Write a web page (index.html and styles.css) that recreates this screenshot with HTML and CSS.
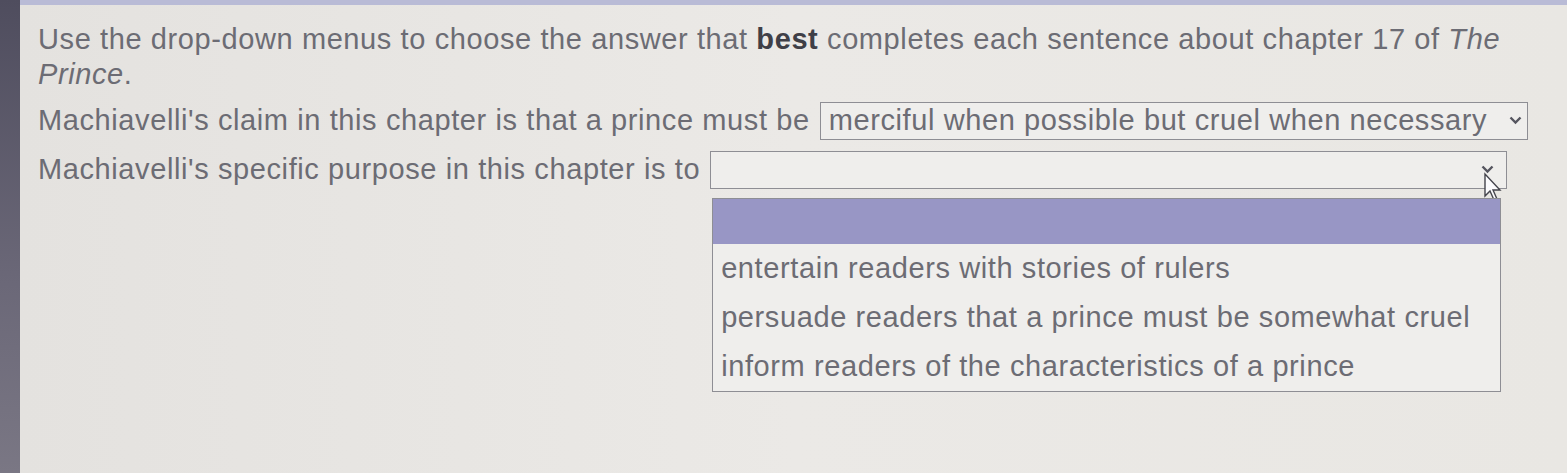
FILE: index.html
```html
<!DOCTYPE html>
<html lang="en">
<head>
    <meta charset="UTF-8">
    <meta name="viewport" content="width=device-width, initial-scale=1.0">
    <title>The Prince - Chapter 17</title>
    <link rel="stylesheet" href="styles.css">
</head>
<body>
    <div class="page">
        <div class="side-strip"></div>
        <div class="content">
            <p class="intro">Use the drop-down menus to choose the answer that <b>best</b> completes each sentence about chapter 17 of <i>The Prince</i>.</p>

            <div class="question">
                <span>Machiavelli's claim in this chapter is that a prince must be</span>
                <div class="select first">
                    <span class="value">merciful when possible but cruel when necessary</span>
                    <span class="chevron">
                        <svg width="13" height="9" viewBox="0 0 13 9"><path d="M1.5 1.5 L6.5 6.5 L11.5 1.5" fill="none" stroke="#55555f" stroke-width="2.4"/></svg>
                    </span>
                </div>
            </div>

            <div class="question">
                <span>Machiavelli's specific purpose in this chapter is to</span>
                <div class="select second">
                    <span class="value"></span>
                    <span class="chevron">
                        <svg width="13" height="9" viewBox="0 0 13 9"><path d="M1.5 1.5 L6.5 6.5 L11.5 1.5" fill="none" stroke="#55555f" stroke-width="2.4"/></svg>
                    </span>
                    <svg class="cursor" width="22" height="30" viewBox="0 0 22 30"><path d="M2 2 L2 24 L7 19 L11 28 L14 27 L10 18 L17 18 Z" fill="#fbfbfd" stroke="#44444c" stroke-width="1.4"/></svg>
                    <ul class="options">
                        <li class="selected"></li>
                        <li>entertain readers with stories of rulers</li>
                        <li>persuade readers that a prince must be somewhat cruel</li>
                        <li>inform readers of the characteristics of a prince</li>
                    </ul>
                </div>
            </div>
        </div>
    </div>
</body>
</html>
```

FILE: styles.css
```css
body {
  margin: 0;
  padding: 0;
  background-color: #e7e5e2;
  font-family: "Liberation Sans", Arial, sans-serif;
  color: #6c6c74;
  overflow: hidden;
}
.page {
  display: flex;
  height: 473px;
}
.side-strip {
  width: 20px;
  flex-shrink: 0;
  background: linear-gradient(to bottom, #4f4d5e, #6b6878 60%, #7a7784);
}
.content {
  flex: 1;
  border-top: 5px solid #b9bbd6;
  padding: 17px 30px 0 18px;
  background: linear-gradient(to right, #e4e2df, #ebe9e6 50%, #e9e7e3);
  font-size: 29px;
  letter-spacing: 0.6px;
}
.intro {
  margin: 0 0 4px 0;
  line-height: 35px;
}
.intro b {
  color: #3f3f47;
}
.question {
  display: flex;
  align-items: center;
  height: 49px;
  white-space: nowrap;
}
.select {
  position: relative;
  display: flex;
  align-items: center;
  justify-content: space-between;
  height: 38px;
  box-sizing: border-box;
  border: 1.5px solid #8e8e94;
  background-color: #efeeec;
  padding: 0 5px 0 8px;
  margin-left: 10px;
}
.select.first {
  width: 708px;
}
.select.second {
  width: 797px;
  padding-right: 12px;
}
.chevron {
  display: flex;
  align-items: center;
}
.cursor {
  position: absolute;
  right: 1px;
  top: 20px;
}
.options {
  position: absolute;
  top: 46px;
  left: 1px;
  width: 789px;
  margin: 0;
  padding: 0;
  list-style: none;
  background-color: #efeeec;
  border: 1.5px solid #8e8e94;
  box-sizing: border-box;
}
.options li {
  height: 49px;
  line-height: 49px;
  padding-left: 8px;
}
.options li.selected {
  height: 45px;
  background-color: #9896c5;
}
```
